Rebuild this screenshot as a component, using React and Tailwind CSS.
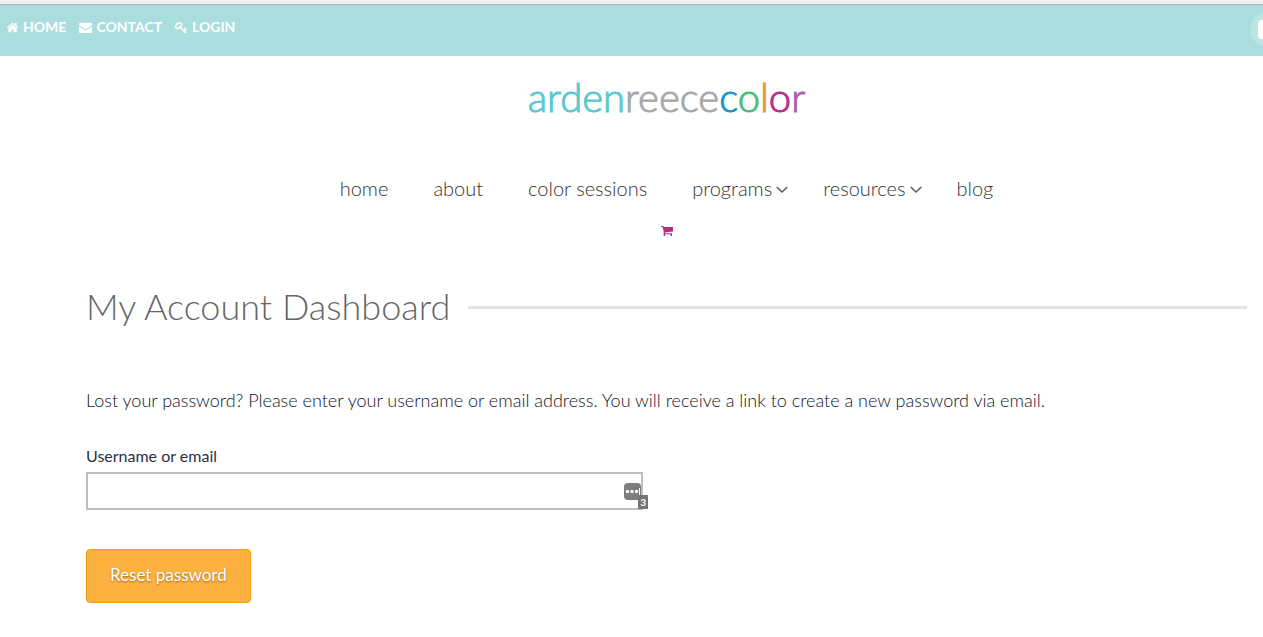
import React, { useState } from 'react';

const topLinks = [
  {
    label: 'HOME',
    icon: 'M1472 992v480q0 26-19 45t-45 19h-384v-384h-256v384h-384q-26 0-45-19t-19-45v-480q0-1 .5-3t.5-3l575-474 575 474q1 2 1 6zm223-69l-62 74q-8 9-21 11h-3q-13 0-21-7l-692-577-692 577q-12 8-24 7-13-2-21-11l-62-74q-8-10-7-23.5t11-21.5l719-599q32-26 76-26t76 26l244 204v-195q0-14 9-23t23-9h192q14 0 23 9t9 23v408l219 182q10 8 11 21.5t-7 23.5z',
  },
  {
    label: 'CONTACT',
    icon: 'M1792 710v794q0 66-47 113t-113 47h-1472q-66 0-113-47t-47-113v-794q44 49 101 87 362 246 497 345 57 42 92.5 65.5t94.5 48 110 24.500h2q51 0 110-24.5t94.5-48 92.5-65.5q170-123 498-345 57-39 100-87zm0-294q0 79-49 151t-122 123q-376 261-468 325-10 7-42.5 30.5t-54 38-52 32.5-57.5 27-50 9h-2q-23 0-50-9t-57.5-27-52-32.5-54-38-42.5-30.5q-91-64-262-182.5t-205-142.5q-62-42-117-115.5t-55-136.5q0-78 41.500-130t118.500-52h1472q65 0 112.500 47t47.500 113z',
  },
  {
    label: 'LOGIN',
    icon: 'M832 512q0-80-56-136t-136-56-136 56-56 136q0 42 19 83-41-19-83-19-80 0-136 56t-56 136 56 136 136 56 136-56 56-136q0-42-19-83 41 19 83 19 80 0 136-56t56-136zm851 704q0 17-49 66t-66 49q-9 0-28.5-16t-36.5-33-38.5-40-24.5-26l-96 96 220 220q28 28 28 68 0 42-39 81t-81 39q-40 0-68-28l-671-671q-176 131-365 131-163 0-265.5-102.5t-102.5-265.5q0-160 95-313t248-248 313-95q163 0 265.5 102.500t102.500 265.500q0 189-131 365l355 355 96-96q-3-3-26-24.500t-40-38.500-33-36.500-16-28.500q0-17 49-66t66-49q13 0 23 10 6 6 46 44.500t82 79.500 86.500 86 73 78 28.500 41z',
  },
];

const menu = [
  { label: 'home' },
  { label: 'about' },
  { label: 'color sessions' },
  { label: 'programs', dropdown: true },
  { label: 'resources', dropdown: true },
  { label: 'blog' },
];

const TopBar = () => (
  <div className="flex h-[52px] items-start justify-between overflow-hidden border-t border-[#b5b5b5] bg-[#aadddd]">
    <nav className="flex gap-[13px] pt-3 pl-[6px]">
      {topLinks.map((link) => (
        <a key={link.label} href="#" className="flex items-center gap-1 text-[14px] leading-5 font-bold text-white">
          <svg className="h-[13px] w-[13px]" viewBox="0 0 1792 1792" fill="currentColor">
            <path d={link.icon} />
          </svg>
          {link.label}
        </a>
      ))}
    </nav>
    {/* social button, runs past the edge of the bar */}
    <a href="#" aria-label="Facebook" className="-mr-[22px] mt-[7px] flex h-[35px] w-[35px] items-center justify-center rounded-full bg-[#bbe4e4]">
      <span className="h-[19px] w-[19px] rounded bg-white"></span>
    </a>
  </div>
);

const Logo = () => (
  <a href="#" className="text-[40px] leading-[48px] font-light whitespace-nowrap [-webkit-text-stroke:1px]">
    <span className="text-[#5bc8cf]">arden</span>
    <span className="text-[#a7a9ac]">reece</span>
    <span className="text-[#1c96c5]">c</span>
    <span className="text-[#4dbd7c]">o</span>
    <span className="text-[#e8963c]">l</span>
    <span className="text-[#b92b8a]">o</span>
    <span className="text-[#b05fa8]">r</span>
  </a>
);

const App = () => {
  const [username, setUsername] = useState('');

  return (
    <div className="bg-white pt-1 font-['Lato','Open_Sans',sans-serif] shadow-[inset_0_4px_0_#f0f0f0]">
      <TopBar />

      <div className="pr-4 pb-8 pl-[86px]">
        <header className="flex flex-col items-center pt-[17px]">
          <Logo />

          <nav className="mt-[52px] flex gap-[35px] text-[20px] leading-[30px] font-light text-[#333]">
            {menu.map((item) =>
              item.dropdown ? (
                <a key={item.label} href="#" className="flex items-center gap-1">
                  {item.label}
                  <svg className="mt-1 h-3 w-3 text-[#555]" viewBox="0 0 12 12" fill="none" stroke="currentColor" strokeWidth="1.4">
                    <path d="M.8 3l5.200 5 5.200-5" />
                  </svg>
                </a>
              ) : (
                <a key={item.label} href="#" className="pr-[10px] last:pr-0">
                  {item.label}
                </a>
              )
            )}
          </nav>

          <a href="#" aria-label="Cart" className="mt-[22px] text-[#b92b8a]">
            <svg className="h-3 w-3" viewBox="0 0 12 12" fill="currentColor">
              <path d="M0 1h2.500l.3 1H12v4.500L3.800 7.500v.7H11v1H2.700V6.500L1.500 2H0z" />
              <path d="M2.700 9h1.500v2H2.700zM9.500 9H11v2H9.500z" />
            </svg>
          </a>
        </header>

        <main className="mt-[44px]">
          <div className="flex items-center gap-[18px]">
            <h1 className="pb-[2px] text-[36px] leading-[50px] font-light text-[#666]">My Account Dashboard</h1>
            <div className="h-[3px] flex-1 bg-[#e3e3e3]"></div>
          </div>

          <form onSubmit={(e) => e.preventDefault()} className="mt-[53px] text-[#2a2f4a]">
            <p className="text-[18px] leading-7 font-light text-[#10142e]">
              Lost your password? Please enter your username or email address. You will receive a link to create a new password via email.
            </p>

            <label htmlFor="username" className="mt-7 block text-[16px] leading-7">
              Username or email
            </label>
            <div className="relative mt-[2px] w-[48%]">
              <input
                id="username"
                type="text"
                value={username}
                onChange={(e) => setUsername(e.target.value)}
                className="block h-[38px] w-full border-2 border-[#bebebe] bg-white px-2 pr-8 outline-none"
              />
              {/* password manager badge */}
              <div className="absolute top-[11px] right-[2px] flex h-[17px] w-[17px] items-center justify-center rounded-sm bg-[#7d7d7d]">
                <svg className="h-[17px] w-[17px]" viewBox="0 0 17 17" fill="#fff">
                  <circle cx="3.5" cy="8.5" r="1.7" />
                  <circle cx="8" cy="8.5" r="1.7" />
                  <circle cx="12.5" cy="8.5" r="1.7" />
                  <path d="M15 5h1v7h-1z" />
                </svg>
              </div>
              <span className="absolute top-[23px] -right-[5px] h-[14px] w-[10px] bg-[#757575] text-center text-[10px] leading-[14px] font-bold text-white">
                3
              </span>
            </div>

            <button
              type="submit"
              className="mt-[39px] h-[54px] rounded border border-[#f59c0b] bg-[#fbb03f] px-[23px] pb-[2px] text-[17px] text-white [text-shadow:0_1px_2px_rgba(0,0,0,0.4)]"
            >
              Reset password
            </button>
          </form>
        </main>
      </div>
    </div>
  );
};

export default App;
